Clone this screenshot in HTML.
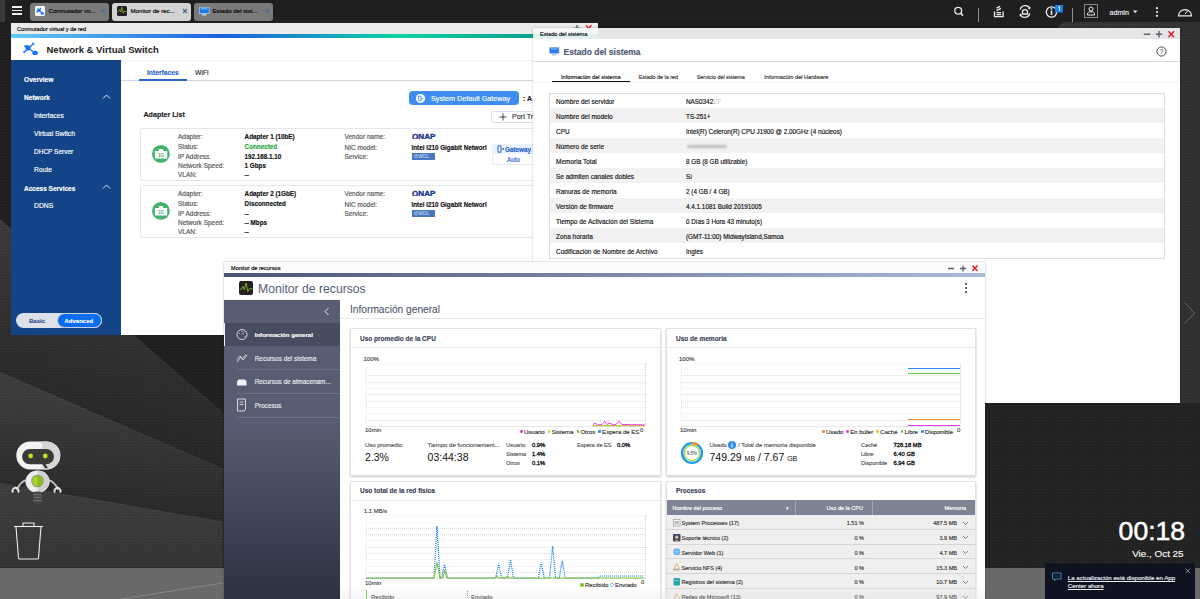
<!DOCTYPE html>
<html><head><meta charset="utf-8">
<style>
*{margin:0;padding:0;box-sizing:border-box}
html,body{width:1200px;height:599px;overflow:hidden;background:#262626;font-family:"Liberation Sans",sans-serif;color:#222}
.abs{position:absolute}
.t{position:absolute;white-space:nowrap;line-height:1;-webkit-text-stroke:0.15px currentColor}
svg{display:block}
</style></head><body>
<svg class="abs" style="left:0;top:0" width="1200" height="599">
  <defs>
   <pattern id="tex" width="3" height="3" patternUnits="userSpaceOnUse"><rect x="0" y="0" width="1.5" height="1.5" fill="rgba(255,255,255,0.035)"/></pattern>
   <linearGradient id="gAB" gradientUnits="userSpaceOnUse" x1="40" y1="250" x2="0" y2="420"><stop offset="0" stop-color="#363636"/><stop offset="1" stop-color="#242424"/></linearGradient>
   <linearGradient id="gBC" gradientUnits="userSpaceOnUse" x1="60" y1="400" x2="50" y2="500"><stop offset="0" stop-color="#3a3a3a"/><stop offset="1" stop-color="#282828"/></linearGradient>
   <linearGradient id="gC" gradientUnits="userSpaceOnUse" x1="0" y1="500" x2="0" y2="567"><stop offset="0" stop-color="#3b3b3b"/><stop offset="1" stop-color="#333"/></linearGradient>
  </defs>
  <rect x="0" y="0" width="1200" height="599" fill="#272727"/>
  <polygon points="0,22 1200,22 1200,403 223,413 0,219.5" fill="#1e1e1e"/>
  <polygon points="1063,22 1200,22 1200,28 1057,28" fill="#333"/><rect x="1180" y="22" width="20" height="390" fill="#2e2e2e"/>
  <polygon points="0,219.5 223,413 223,469 0,372.3" fill="url(#gAB)"/>
  <polygon points="0,372.3 223,469 223,522 0,483.3" fill="url(#gBC)"/>
  <polygon points="0,483.3 223,522 223,567 0,567" fill="url(#gC)"/>
  <g stroke="rgba(255,255,255,0.09)" stroke-width="0.7"><line x1="0" y1="219.5" x2="223" y2="413"/><line x1="0" y1="372.3" x2="223" y2="469"/><line x1="0" y1="483.3" x2="223" y2="522"/></g>
  <rect x="985" y="403" width="215" height="165" fill="#212121"/>
  <rect x="0" y="568" width="1200" height="31" fill="#676767"/>
  <line x1="120" y1="599" x2="223" y2="583" stroke="#8a8a8a" stroke-width="0.8"/>
  <rect x="0" y="22" width="1200" height="577" fill="url(#tex)"/>
</svg>
<div class="abs" style="left:0px;top:0px;width:1200px;height:22px;background:#1f1f1f"></div>
<div class="abs" style="left:0px;top:0px;width:5px;height:22px;background:#3a3a3a"></div>
<div class="abs" style="left:12px;top:6px;width:10px;height:1.5px;background:#f0f0f0"></div>
<div class="abs" style="left:12px;top:9.6px;width:10px;height:1.5px;background:#f0f0f0"></div>
<div class="abs" style="left:12px;top:13.2px;width:10px;height:1.5px;background:#f0f0f0"></div>
<div class="abs" style="left:30px;top:2.5px;width:79px;height:18px;background:#7a7a7a;border-radius:3px"></div>
<div class="t" style="left:48.5px;top:8.22px;font-size:6.15px;color:#000;font-weight:400;">Conmutador vir...</div>
<svg class="abs" style="left:99.5px;top:7.8px" width="6" height="6"><path d="M1 1l4 4M5 1l-4 4" stroke="#4a6d99" stroke-width="1.3"/></svg>
<div class="abs" style="left:112px;top:2.5px;width:79px;height:18px;background:#d3d3d3;border-radius:3px"></div>
<div class="t" style="left:130.5px;top:8.22px;font-size:6.15px;color:#000;font-weight:400;">Monitor de rec...</div>
<svg class="abs" style="left:181.5px;top:7.8px" width="6" height="6"><path d="M1 1l4 4M5 1l-4 4" stroke="#4a6d99" stroke-width="1.3"/></svg>
<div class="abs" style="left:194px;top:2.5px;width:79px;height:18px;background:#7a7a7a;border-radius:3px"></div>
<div class="t" style="left:212.5px;top:8.22px;font-size:6.15px;color:#000;font-weight:400;">Estado del sist...</div>
<svg class="abs" style="left:263.5px;top:7.8px" width="6" height="6"><path d="M1 1l4 4M5 1l-4 4" stroke="#4a6d99" stroke-width="1.3"/></svg>
<svg class="abs" style="left:35px;top:6px" width="10" height="10"><rect width="10" height="10" rx="1.5" fill="#f5f8fc"/>
<g stroke="#1e78f0" stroke-width="1.1"><line x1="1.5" y1="6.5" x2="6" y2="2"/><line x1="2.5" y1="2.5" x2="7" y2="7"/></g><circle cx="4" cy="4.3" r="1.6" fill="#1e78f0"/><ellipse cx="7.4" cy="7.5" rx="1.6" ry="1.2" fill="#1e78f0"/></svg>
<svg class="abs" style="left:117px;top:6px" width="10" height="10"><rect width="10" height="10" rx="1.5" fill="#231f20"/>
<path d="M0.3 6l1.2-0.5l1.2-2l1 2.5l1.3-4.8l1.2 6l1-1.8h2.5" stroke="#7dba2a" stroke-width="0.8" fill="none"/></svg>
<svg class="abs" style="left:199px;top:7px" width="11" height="10"><rect x="0" y="0" width="10.5" height="7" fill="#bcd0e0"/><rect x="0.7" y="0.6" width="9.1" height="5.6" fill="#1f7ae8"/><rect x="2" y="1.3" width="6.5" height="1" fill="#8cc0f4"/><rect x="3" y="7" width="4.5" height="1.6" fill="#b8c4cc"/></svg>
<svg class="abs" style="left:940px;top:0" width="260" height="22">
 <g fill="none" stroke="#ececec" stroke-width="1.3">
  <circle cx="18.2" cy="10.8" r="3.4"/><line x1="20.6" y1="13.2" x2="23" y2="15.6" stroke-width="1.6"/>
  <path d="M54.5 11.5v5.2h8.6v-5.2"/><path d="M56.5 14.6h4.6M56.5 12.6h4.6"/><path d="M56.5 10.6l4.4-2.2M56.5 8.2l3.6-1.8"/>
  <path d="M80.2 9.5a5.3 5.3 0 0 1 9.8-1"/><path d="M89.8 13.5a5.3 5.3 0 0 1 -9.8 1"/>
  <path d="M82.5 14v-2.2a2.5 2.2 0 0 1 5 0v2.2z"/>
  <circle cx="111.5" cy="12" r="5.2"/>
  <rect x="144.5" y="4.5" width="13" height="13" stroke="#8a8a8a" stroke-width="1"/>
  <path d="M147.5 15v-1.2c0-1.2 1.2-2 3.5-2s3.5 .8 3.5 2v1.2z" stroke-width="1"/><circle cx="151" cy="9" r="2" stroke-width="1"/>
  <path d="M238.5 15.8a6.5 6.2 0 1 1 13 0z" stroke-width="1.2"/><path d="M245 14l3-3.5" stroke-width="1"/>
 </g>
 <rect x="110.7" y="10.5" width="1.6" height="4.5" fill="#ececec"/><rect x="110.7" y="8.2" width="1.6" height="1.4" fill="#ececec"/>
 <path d="M90.8 7.2l-1.2 2.2l-1.8-1.4z M79.2 15.8l1.2-2.2l1.8 1.4z" fill="#ececec"/>
 <line x1="38.5" y1="8" x2="38.5" y2="22" stroke="#8a8fa8" stroke-width="1"/>
 <line x1="132.5" y1="8" x2="132.5" y2="22" stroke="#8a8fa8" stroke-width="1"/>
 <rect x="115" y="5" width="8" height="7.5" fill="#1e7ef0"/>
 <path d="M118.3 7.2l1.2-0.8v4.5" stroke="#fff" stroke-width="0.9" fill="none"/>
 <path d="M193 10.5h4.5l-2.25 2.8z" fill="#eee"/>
 <circle cx="217" cy="8.2" r="1.1" fill="#eee"/><circle cx="217" cy="12" r="1.1" fill="#eee"/><circle cx="217" cy="15.8" r="1.1" fill="#eee"/>
</svg>
<div class="t" style="left:1109.5px;top:9.85px;font-size:7.1px;color:#eee;font-weight:400;">admin</div>
<div class="abs" style="left:11px;top:23px;width:587px;height:312px;overflow:hidden;background:#fff">
<div class="abs" style="left:0px;top:0px;width:587px;height:11px;background:#ebebeb"></div>
<div class="t" style="left:6px;top:4.1px;font-size:5.6px;color:#000;font-weight:400;">Conmutador virtual y de red</div>
<div class="abs" style="left:0px;top:11px;width:587px;height:4px;background:linear-gradient(to right,#62cbf2 0%,#1f5fe0 36%,#0dd3a5 66%,#0b8585 100%)"></div>
<svg class="abs" style="left:549px;top:1.3px" width="36" height="9"><g stroke="#5a6070" stroke-width="1.4"><path d="M17 1.1v6.4M13.8 4.3h6.4"/></g><path d="M26 1.3l5.5 6M31.5 1.3l-5.5 6" stroke="#e8141c" stroke-width="1.3"/></svg>
<svg class="abs" style="left:9px;top:17px" width="20" height="17"><g stroke="#1577f2" stroke-width="1.2" fill="none"><line x1="4.2" y1="12.2" x2="13.3" y2="3.7"/><line x1="5.7" y1="6.3" x2="15" y2="12.9"/></g><circle cx="8.1" cy="7.9" r="2.6" fill="#1577f2"/><circle cx="5.7" cy="6.3" r="1.3" fill="#1577f2"/><circle cx="13.3" cy="3.7" r="1.1" fill="#1577f2"/><circle cx="4.2" cy="12.2" r="1" fill="#1577f2"/><ellipse cx="15.1" cy="12.9" rx="2.8" ry="2.2" fill="#1577f2"/></svg>
<div class="t" style="left:35.5px;top:22.35px;font-size:9.5px;color:#222;font-weight:700;-webkit-text-stroke:0;">Network &amp; Virtual Switch</div>
<div class="abs" style="left:110px;top:37px;width:477px;height:1px;background:#eef0f3"></div>
<div class="abs" style="left:0px;top:37px;width:110px;height:275px;background:#134487"></div>
<div class="t" style="left:13px;top:53.6px;font-size:6.6px;color:#fff;font-weight:700;">Overview</div>
<div class="t" style="left:13px;top:72.1px;font-size:6.6px;color:#fff;font-weight:700;">Network</div>
<div class="t" style="left:23px;top:90.1px;font-size:6.8px;color:#fff;font-weight:400;">Interfaces</div>
<div class="t" style="left:23px;top:107.9px;font-size:6.8px;color:#fff;font-weight:400;">Virtual Switch</div>
<div class="t" style="left:23px;top:126.25px;font-size:6.5px;color:#fff;font-weight:400;">DHCP Server</div>
<div class="t" style="left:23px;top:144.1px;font-size:6.8px;color:#fff;font-weight:400;">Route</div>
<div class="t" style="left:13px;top:162.65px;font-size:6.5px;color:#fff;font-weight:700;">Access Services</div>
<div class="t" style="left:23px;top:180.1px;font-size:6.8px;color:#fff;font-weight:400;">DDNS</div>
<svg class="abs" style="left:91px;top:70.5px" width="9" height="6"><path d="M1 4.5l3.5-3.5l3.5 3.5" stroke="#dfe6f0" stroke-width="1" fill="none"/></svg>
<svg class="abs" style="left:91px;top:161px" width="9" height="6"><path d="M1 4.5l3.5-3.5l3.5 3.5" stroke="#dfe6f0" stroke-width="1" fill="none"/></svg>
<div class="abs" style="left:5px;top:289.5px;width:86px;height:15.5px;background:#dde2ea;border-radius:8px"></div>
<div class="abs" style="left:45.5px;top:289.5px;width:45.5px;height:15.5px;background:#0a6cf0;border-radius:8px;border:1px solid #c8d2e0"></div>
<div class="t" style="left:18px;top:295.2px;font-size:6px;color:#1f4a88;font-weight:700;">Basic</div>
<div class="t" style="left:53.5px;top:295.2px;font-size:6px;color:#fff;font-weight:700;">Advanced</div>
<div class="t" style="left:136px;top:47.05px;font-size:6.7px;color:#2a66cc;font-weight:700;">Interfaces</div>
<div class="t" style="left:184px;top:47.0px;font-size:6.8px;color:#333;font-weight:400;">WiFi</div>
<div class="abs" style="left:110px;top:57px;width:477px;height:1px;background:#d4d8de"></div>
<div class="abs" style="left:128px;top:56px;width:48px;height:1.8px;background:#2a66cc"></div>
<div class="t" style="left:132.5px;top:89.35px;font-size:7.1px;color:#222;font-weight:700;">Adapter List</div>
<div class="abs" style="left:397.6px;top:68.4px;width:110px;height:13.3px;background:#3d8ef0;border-radius:4px"></div>
<svg class="abs" style="left:404px;top:69.5px" width="11" height="11"><circle cx="5.5" cy="5.5" r="4.6" fill="#fff"/><path d="M3.6 3.2h2.4v4.6h-2.4z" fill="none" stroke="#3d8ef0" stroke-width="0.9"/><path d="M6.3 5.5h1.8" stroke="#3d8ef0" stroke-width="0.9"/></svg>
<div class="t" style="left:420px;top:71.9px;font-size:7.2px;color:#fff;font-weight:400;">System Default Gateway</div>
<div class="t" style="left:512px;top:72.4px;font-size:7px;color:#222;font-weight:700;">: A</div>
<div class="abs" style="left:480px;top:87.6px;width:60px;height:12px;background:#fff;border:1px solid #dde1e6;border-radius:3px"></div>
<svg class="abs" style="left:487.5px;top:89.5px" width="8" height="8"><path d="M4 0.5v7M0.5 4h7" stroke="#333" stroke-width="0.9"/></svg>
<div class="t" style="left:501px;top:90.0px;font-size:7px;color:#333;font-weight:400;">Port Tr</div>
<div class="abs" style="left:128.6px;top:104.7px;width:460px;height:53px;background:#fff;border:1px solid #e3e7ed;border-radius:2px"></div>
<svg class="abs" style="left:141.2px;top:122.1px" width="18" height="18"><circle cx="8.9" cy="8.9" r="8.9" fill="#45b36e"/><path d="M2.8 6.1h4v-2.1h4.2v2.1h4.2v7.5h-12.2z" fill="#fff"/><text x="9" y="11.6" font-size="4.6" fill="#45b36e" text-anchor="middle" font-family="Liberation Sans" font-weight="700">1G</text></svg>
<div class="t" style="left:167px;top:111.35px;font-size:6.5px;color:#555;font-weight:400;">Adapter:</div>
<div class="t" style="left:233.6px;top:111.45px;font-size:6.3px;color:#111;font-weight:700;">Adapter 1 (10bE)</div>
<div class="t" style="left:167px;top:121.35px;font-size:6.5px;color:#555;font-weight:400;">Status:</div>
<div class="t" style="left:233.6px;top:121.45px;font-size:6.3px;color:#1ca83a;font-weight:700;">Connected</div>
<div class="t" style="left:167px;top:130.55px;font-size:6.5px;color:#555;font-weight:400;">IP Address:</div>
<div class="t" style="left:233.6px;top:130.65px;font-size:6.3px;color:#111;font-weight:700;">192.168.1.10</div>
<div class="t" style="left:167px;top:139.55px;font-size:6.5px;color:#555;font-weight:400;">Network Speed:</div>
<div class="t" style="left:233.6px;top:139.65px;font-size:6.3px;color:#111;font-weight:700;">1 Gbps</div>
<div class="t" style="left:167px;top:148.55px;font-size:6.5px;color:#555;font-weight:400;">VLAN:</div>
<div class="t" style="left:233.6px;top:148.65px;font-size:6.3px;color:#111;font-weight:700;">--</div>
<div class="t" style="left:333.5px;top:111.35px;font-size:6.5px;color:#555;font-weight:400;">Vendor name:</div>
<div class="t" style="left:333.5px;top:121.85px;font-size:6.5px;color:#555;font-weight:400;">NIC model:</div>
<div class="t" style="left:333.5px;top:131.05px;font-size:6.5px;color:#555;font-weight:400;">Service:</div>
<svg class="abs" style="left:400.5px;top:110.3px" width="26" height="6"><text x="0" y="5.6" font-size="7.2" font-weight="700" fill="#1c3a8c" font-family="Liberation Sans" textLength="23.5" lengthAdjust="spacingAndGlyphs" stroke="#1c3a8c" stroke-width="0.35">QNAP</text><circle cx="4.2" cy="4.8" r="0.6" fill="#e0202a"/></svg>
<div class="t" style="left:400.5px;top:121.95px;font-size:6.3px;color:#111;font-weight:700;">Intel I210 Gigabit Networl</div>
<div class="abs" style="left:400.5px;top:130.2px;width:23.5px;height:6.5px;background:#4a78c0"></div>
<svg class="abs" style="left:402.5px;top:131.3px" width="5" height="5"><circle cx="2.2" cy="2.4" r="1.6" fill="none" stroke="#dde6f4" stroke-width="0.6"/><path d="M2.2 0.3v2" stroke="#dde6f4" stroke-width="0.6"/></svg>
<div class="t" style="left:407.5px;top:132.2px;font-size:4.6px;color:#dde6f4;font-weight:400;-webkit-text-stroke:0">WOL</div>
<div class="abs" style="left:128.6px;top:161.7px;width:460px;height:53px;background:#fff;border:1px solid #e3e7ed;border-radius:2px"></div>
<svg class="abs" style="left:141.2px;top:179.1px" width="18" height="18"><circle cx="8.9" cy="8.9" r="8.9" fill="#45b36e"/><path d="M2.8 6.1h4v-2.1h4.2v2.1h4.2v7.5h-12.2z" fill="#fff"/><text x="9" y="11.6" font-size="4.6" fill="#45b36e" text-anchor="middle" font-family="Liberation Sans" font-weight="700">1G</text></svg>
<div class="t" style="left:167px;top:168.35px;font-size:6.5px;color:#555;font-weight:400;">Adapter:</div>
<div class="t" style="left:233.6px;top:168.45px;font-size:6.3px;color:#111;font-weight:700;">Adapter 2 (1GbE)</div>
<div class="t" style="left:167px;top:178.35px;font-size:6.5px;color:#555;font-weight:400;">Status:</div>
<div class="t" style="left:233.6px;top:178.45px;font-size:6.3px;color:#111;font-weight:700;">Disconnected</div>
<div class="t" style="left:167px;top:187.55px;font-size:6.5px;color:#555;font-weight:400;">IP Address:</div>
<div class="t" style="left:233.6px;top:187.65px;font-size:6.3px;color:#111;font-weight:700;">--</div>
<div class="t" style="left:167px;top:196.55px;font-size:6.5px;color:#555;font-weight:400;">Network Speed:</div>
<div class="t" style="left:233.6px;top:196.65px;font-size:6.3px;color:#111;font-weight:700;">-- Mbps</div>
<div class="t" style="left:167px;top:205.55px;font-size:6.5px;color:#555;font-weight:400;">VLAN:</div>
<div class="t" style="left:233.6px;top:205.65px;font-size:6.3px;color:#111;font-weight:700;">--</div>
<div class="t" style="left:333.5px;top:168.35px;font-size:6.5px;color:#555;font-weight:400;">Vendor name:</div>
<div class="t" style="left:333.5px;top:178.85px;font-size:6.5px;color:#555;font-weight:400;">NIC model:</div>
<div class="t" style="left:333.5px;top:188.05px;font-size:6.5px;color:#555;font-weight:400;">Service:</div>
<svg class="abs" style="left:400.5px;top:167.3px" width="26" height="6"><text x="0" y="5.6" font-size="7.2" font-weight="700" fill="#1c3a8c" font-family="Liberation Sans" textLength="23.5" lengthAdjust="spacingAndGlyphs" stroke="#1c3a8c" stroke-width="0.35">QNAP</text><circle cx="4.2" cy="4.8" r="0.6" fill="#e0202a"/></svg>
<div class="t" style="left:400.5px;top:178.95px;font-size:6.3px;color:#111;font-weight:700;">Intel I210 Gigabit Networl</div>
<div class="abs" style="left:400.5px;top:187.2px;width:23.5px;height:6.5px;background:#4a78c0"></div>
<svg class="abs" style="left:402.5px;top:188.3px" width="5" height="5"><circle cx="2.2" cy="2.4" r="1.6" fill="none" stroke="#dde6f4" stroke-width="0.6"/><path d="M2.2 0.3v2" stroke="#dde6f4" stroke-width="0.6"/></svg>
<div class="t" style="left:407.5px;top:189.2px;font-size:4.6px;color:#dde6f4;font-weight:400;-webkit-text-stroke:0">WOL</div>
<div class="abs" style="left:481px;top:120.5px;width:50px;height:21px;background:#fff;border:1px solid #e6ecf4"></div>
<div class="abs" style="left:481px;top:120.5px;width:50px;height:10px;background:#eaf2fd"></div>
<svg class="abs" style="left:485.5px;top:122.3px" width="8" height="8"><path d="M1 0.8h3v6.4h-3z" fill="none" stroke="#1f5fc8" stroke-width="0.9"/><path d="M4.5 4h2.5M6 3v2" stroke="#1f5fc8" stroke-width="0.8"/></svg>
<div class="t" style="left:494px;top:123.95px;font-size:6.3px;color:#1f5fc8;font-weight:700;">Gateway</div>
<div class="t" style="left:496px;top:134.25px;font-size:6.3px;color:#1f5fc8;font-weight:400;">Auto</div>
</div>
<div class="abs" style="left:533px;top:28px;width:647px;height:375px;overflow:hidden;background:#fff;box-shadow:0 0 2px rgba(0,0,0,.25)">
<div class="abs" style="left:0px;top:0px;width:647px;height:10.5px;background:#e6e6e6"></div>
<div class="abs" style="left:0px;top:0px;width:65px;height:10.5px;background:#f6f8f8"></div>
<div class="t" style="left:7px;top:3.6px;font-size:5.6px;color:#000;font-weight:400;">Estado del sistema</div>
<svg class="abs" style="left:609px;top:1.5px" width="36" height="9"><g stroke="#5a6070" stroke-width="1.4"><path d="M1.8 4.3h6.4M13.8 4.3h6.4M17 1.1v6.4"/></g><path d="M26.5 1.3l5.5 6M32 1.3l-5.5 6" stroke="#e8141c" stroke-width="1.3"/></svg>
<div class="abs" style="left:0px;top:6px;width:65px;height:4.5px;background:rgba(13,170,160,0.09)"></div>
<svg class="abs" style="left:15.5px;top:19px" width="11" height="10"><rect x="0" y="0" width="10.5" height="7" fill="#c4d4e2"/><rect x="0.7" y="0.6" width="9.1" height="5.6" fill="#2a7de6"/><rect x="2" y="1.4" width="6.5" height="1" fill="#8cc0f4"/><rect x="3" y="7" width="4.5" height="1.4" fill="#b8c4cc"/></svg>
<div class="t" style="left:30.5px;top:19.65px;font-size:8.5px;color:#4f5874;font-weight:700;">Estado del sistema</div>
<svg class="abs" style="left:623px;top:17.5px" width="11" height="11"><circle cx="5.5" cy="5.5" r="4.6" fill="none" stroke="#333" stroke-width="0.9"/><text x="5.5" y="8" font-size="7" fill="#333" text-anchor="middle" font-family="Liberation Sans">?</text></svg>
<div class="abs" style="left:0px;top:33.3px;width:647px;height:1px;background:#d8d8d8"></div>
<div class="t" style="left:28px;top:47.08px;font-size:5.65px;color:#111;font-weight:400;">Información del sistema</div>
<div class="t" style="left:105.75px;top:47.2px;font-size:5.4px;color:#333;font-weight:400;">Estado de la red</div>
<div class="t" style="left:163.75px;top:47.2px;font-size:5.4px;color:#333;font-weight:400;">Servicio del sistema</div>
<div class="t" style="left:231.25px;top:47.1px;font-size:5.6px;color:#333;font-weight:400;">Información del Hardware</div>
<div class="abs" style="left:18.5px;top:52.8px;width:78.5px;height:1.3px;background:#111"></div>
<div class="abs" style="left:0px;top:54.3px;width:647px;height:1px;background:#f0f0f0"></div>
<div class="abs" style="left:16px;top:65px;width:616px;height:166px;background:#fff;border:1px solid #dedede"></div>
<div class="t" style="left:23px;top:70.65px;font-size:6.5px;color:#111;font-weight:400;">Nombre del servidor</div>
<div class="t" style="left:153px;top:70.73px;font-size:6.35px;color:#111;font-weight:400;">NAS0342<span style="color:#c8c8c8;-webkit-text-stroke:0">EF</span></div>
<div class="abs" style="left:17px;top:80px;width:614px;height:15px;background:#f2f2f2"></div>
<div class="t" style="left:23px;top:85.65px;font-size:6.5px;color:#111;font-weight:400;">Nombre del modelo</div>
<div class="t" style="left:153px;top:85.73px;font-size:6.35px;color:#111;font-weight:400;">TS-251+</div>
<div class="t" style="left:23px;top:100.65px;font-size:6.5px;color:#111;font-weight:400;">CPU</div>
<div class="t" style="left:153px;top:100.72px;font-size:6.35px;color:#111;font-weight:400;">Intel(R) Celeron(R) CPU J1900 @ 2.00GHz (4 núcleos)</div>
<div class="abs" style="left:17px;top:110px;width:614px;height:15px;background:#f2f2f2"></div>
<div class="t" style="left:23px;top:115.65px;font-size:6.5px;color:#111;font-weight:400;">Número de serie</div>
<div class="t" style="left:23px;top:130.65px;font-size:6.5px;color:#111;font-weight:400;">Memoria Total</div>
<div class="t" style="left:153px;top:130.72px;font-size:6.35px;color:#111;font-weight:400;">8 GB (8 GB utilizable)</div>
<div class="abs" style="left:17px;top:140px;width:614px;height:15px;background:#f2f2f2"></div>
<div class="t" style="left:23px;top:145.65px;font-size:6.5px;color:#111;font-weight:400;">Se admiten canales dobles</div>
<div class="t" style="left:153px;top:145.72px;font-size:6.35px;color:#111;font-weight:400;">Sí</div>
<div class="t" style="left:23px;top:160.65px;font-size:6.5px;color:#111;font-weight:400;">Ranuras de memoria</div>
<div class="t" style="left:153px;top:160.72px;font-size:6.35px;color:#111;font-weight:400;">2 (4 GB / 4 GB)</div>
<div class="abs" style="left:17px;top:170px;width:614px;height:15px;background:#f2f2f2"></div>
<div class="t" style="left:23px;top:175.65px;font-size:6.5px;color:#111;font-weight:400;">Versión de firmware</div>
<div class="t" style="left:153px;top:175.72px;font-size:6.35px;color:#111;font-weight:400;">4.4.1.1081 Build 20191005</div>
<div class="t" style="left:23px;top:190.65px;font-size:6.5px;color:#111;font-weight:400;">Tiempo de Activación del Sistema</div>
<div class="t" style="left:153px;top:190.72px;font-size:6.35px;color:#111;font-weight:400;">0 Días 3 Hora 43 minuto(s)</div>
<div class="abs" style="left:17px;top:200px;width:614px;height:15px;background:#f2f2f2"></div>
<div class="t" style="left:23px;top:205.65px;font-size:6.5px;color:#111;font-weight:400;">Zona horaria</div>
<div class="t" style="left:153px;top:205.72px;font-size:6.35px;color:#111;font-weight:400;">(GMT-11:00) MidwayIsland,Samoa</div>
<div class="t" style="left:23px;top:220.65px;font-size:6.5px;color:#111;font-weight:400;">Codificación de Nombre de Archivo</div>
<div class="t" style="left:153px;top:220.72px;font-size:6.35px;color:#111;font-weight:400;">Inglés</div>
<div class="abs" style="left:154px;top:116.5px;width:40px;height:3.5px;background:#bdbdbd;border-radius:3px;filter:blur(1px)"></div>
</div>
<div class="abs" style="left:224px;top:262px;width:761px;height:337px;overflow:hidden;background:#fff;box-shadow:0 0 2px rgba(0,0,0,.3)">
<div class="abs" style="left:-1px;top:0px;width:763px;height:11px;background:#fbfbfb"></div>
<div class="t" style="left:7px;top:4.1px;font-size:5.6px;color:#000;font-weight:400;">Monitor de recursos</div>
<svg class="abs" style="left:722px;top:2px" width="36" height="9"><g stroke="#5a6070" stroke-width="1.3"><path d="M2 4.5h6M14 4.5h6M17 1.5v6"/></g><path d="M26.5 1.5l5 5.5M31.5 1.5l-5 5.5" stroke="#e8141c" stroke-width="1.3"/></svg>
<div class="abs" style="left:-1px;top:11px;width:763px;height:4px;background:linear-gradient(to right,#4b5670,#a8bcd6)"></div>
<svg class="abs" style="left:15px;top:19px" width="14" height="14"><rect width="14" height="14" rx="2.2" fill="#231f20"/><path d="M0.5 9l1.8-0.8l1.6-3l1.4 3.5l1.8-6.7l1.7 8.5l1.4-2.7h3.3" stroke="#7dba2a" stroke-width="0.9" fill="none"/></svg>
<div class="t" style="left:34px;top:21.0px;font-size:12.2px;color:#555e78;font-weight:400;-webkit-text-stroke:0;">Monitor de recursos</div>
<svg class="abs" style="left:740px;top:20px" width="4" height="12"><circle cx="2" cy="2" r="1" fill="#333"/><circle cx="2" cy="6" r="1" fill="#333"/><circle cx="2" cy="10" r="1" fill="#333"/></svg>
<div class="abs" style="left:0px;top:37.5px;width:116px;height:300px;background:linear-gradient(to bottom,#585f74 0px,#565d72 120px,#2d3242 300px)"></div>
<div class="abs" style="left:0px;top:60.8px;width:116px;height:22.8px;background:#474d60;border-left:1px solid #f4f4f4"></div>
<svg class="abs" style="left:99px;top:45px" width="7" height="9"><path d="M5.5 1l-3.5 3.5l3.5 3.5" stroke="#e8ebf0" stroke-width="1" fill="none"/></svg>
<div class="t" style="left:30.7px;top:70.35px;font-size:6.1px;color:#fff;font-weight:700;">Información general</div>
<div class="t" style="left:30.7px;top:93.67px;font-size:6.45px;color:#e8eaf0;font-weight:400;">Recursos del sistema</div>
<div class="t" style="left:30.7px;top:117.3px;font-size:6.4px;color:#e8eaf0;font-weight:400;">Recursos de almacenam...</div>
<div class="t" style="left:30.7px;top:140.67px;font-size:6.45px;color:#e8eaf0;font-weight:400;">Procesos</div>
<div class="abs" style="left:13px;top:107.2px;width:103px;height:1px;background:#6a7083"></div>
<div class="abs" style="left:13px;top:131px;width:103px;height:1px;background:#6a7083"></div>
<div class="abs" style="left:13px;top:154.5px;width:103px;height:1px;background:#6a7083"></div>
<svg class="abs" style="left:12px;top:66px" width="14" height="14"><circle cx="6" cy="6.5" r="5" stroke="#e6e8ee" stroke-width="0.9" fill="none"/><path d="M6 6.5l2.2-2.3M3 5.5h1M6 3v1M8.5 8.5h1" stroke="#e6e8ee" stroke-width="0.8"/></svg>
<svg class="abs" style="left:12px;top:90px" width="14" height="12"><path d="M1 10l3.5-4.5l2.5 2.5l4-5M1 7.5l3-3.5l2.5 2.5l3.5-4" stroke="#e6e8ee" stroke-width="0.8" fill="none"/></svg>
<svg class="abs" style="left:12px;top:114px" width="14" height="12"><path d="M2.5 3.5h6.5l1.5 2v4h-9.5v-4z" fill="#f0f2f6"/></svg>
<svg class="abs" style="left:12px;top:136px" width="14" height="14"><path d="M1.5 1h8v10.5l-1.5 1.5h-6.5z" stroke="#e6e8ee" stroke-width="0.9" fill="none"/><path d="M3.5 4h4M3.5 6.5h4" stroke="#e6e8ee" stroke-width="0.8"/></svg>
<div class="t" style="left:126px;top:42.5px;font-size:10.2px;color:#434a62;font-weight:400;-webkit-text-stroke:0;">Información general</div>
<div class="abs" style="left:116px;top:56px;width:646px;height:1px;background:#e6e6e6"></div>
<div class="abs" style="left:125.5px;top:66px;width:311.0px;height:147.5px;background:#fff;border:1px solid #e2e2e2;box-shadow:0 1px 2px rgba(0,0,0,.22)"></div>
<div class="t" style="left:136.0px;top:73.65px;font-size:6.5px;color:#3b4258;font-weight:700;">Uso promedio de la CPU</div>
<div class="abs" style="left:126.5px;top:85px;width:309.0px;height:1px;background:#e6e6e6"></div>
<div class="abs" style="left:441.5px;top:66px;width:310.0px;height:147.5px;background:#fff;border:1px solid #e2e2e2;box-shadow:0 1px 2px rgba(0,0,0,.22)"></div>
<div class="t" style="left:452.0px;top:73.65px;font-size:6.5px;color:#3b4258;font-weight:700;">Uso de memoria</div>
<div class="abs" style="left:442.5px;top:85px;width:308.0px;height:1px;background:#e6e6e6"></div>
<div class="abs" style="left:125.5px;top:218.8px;width:311.0px;height:139.2px;background:#fff;border:1px solid #e2e2e2;box-shadow:0 1px 2px rgba(0,0,0,.22)"></div>
<div class="t" style="left:136.0px;top:226.45px;font-size:6.5px;color:#3b4258;font-weight:700;">Uso total de la red física</div>
<div class="abs" style="left:126.5px;top:237.8px;width:309.0px;height:1px;background:#e6e6e6"></div>
<div class="abs" style="left:441.5px;top:218.5px;width:310.0px;height:139.5px;background:#fff;border:1px solid #e2e2e2;box-shadow:0 1px 2px rgba(0,0,0,.22)"></div>
<div class="t" style="left:452.0px;top:226.15px;font-size:6.5px;color:#3b4258;font-weight:700;">Procesos</div>
<div class="abs" style="left:442.5px;top:237.5px;width:308.0px;height:1px;background:#e6e6e6"></div>
<div class="abs" style="left:141.5px;top:100.6px;width:1px;height:63.39999999999998px;background:#f3f3f3"></div>
<div class="abs" style="left:141.5px;top:100.6px;width:279.20000000000005px;height:1px;background:repeating-linear-gradient(to right,#dcdcdc 0 1px,transparent 1px 2px);opacity:0.35"></div>
<div class="abs" style="left:141.5px;top:106.94px;width:279.20000000000005px;height:1px;background:repeating-linear-gradient(to right,#dcdcdc 0 1px,transparent 1px 2px);opacity:0.35"></div>
<div class="abs" style="left:141.5px;top:113.28px;width:279.20000000000005px;height:1px;background:repeating-linear-gradient(to right,#dcdcdc 0 1px,transparent 1px 2px);opacity:1"></div>
<div class="abs" style="left:141.5px;top:119.62px;width:279.20000000000005px;height:1px;background:repeating-linear-gradient(to right,#dcdcdc 0 1px,transparent 1px 2px);opacity:1"></div>
<div class="abs" style="left:141.5px;top:125.96px;width:279.20000000000005px;height:1px;background:repeating-linear-gradient(to right,#dcdcdc 0 1px,transparent 1px 2px);opacity:0.55"></div>
<div class="abs" style="left:141.5px;top:132.3px;width:279.20000000000005px;height:1px;background:repeating-linear-gradient(to right,#dcdcdc 0 1px,transparent 1px 2px);opacity:1"></div>
<div class="abs" style="left:141.5px;top:138.64px;width:279.20000000000005px;height:1px;background:repeating-linear-gradient(to right,#dcdcdc 0 1px,transparent 1px 2px);opacity:1"></div>
<div class="abs" style="left:141.5px;top:144.98px;width:279.20000000000005px;height:1px;background:repeating-linear-gradient(to right,#dcdcdc 0 1px,transparent 1px 2px);opacity:0.55"></div>
<div class="abs" style="left:141.5px;top:151.32px;width:279.20000000000005px;height:1px;background:repeating-linear-gradient(to right,#dcdcdc 0 1px,transparent 1px 2px);opacity:0.55"></div>
<div class="abs" style="left:141.5px;top:157.66px;width:279.20000000000005px;height:1px;background:repeating-linear-gradient(to right,#dcdcdc 0 1px,transparent 1px 2px);opacity:1"></div>
<div class="abs" style="left:420.7px;top:100.6px;width:1px;height:63.39999999999998px;background:repeating-linear-gradient(to bottom,#d0d0d0 0 1px,transparent 1px 2px)"></div>
<div class="abs" style="left:141.5px;top:164px;width:279.20000000000005px;height:1px;background:#e8e8e8"></div>
<div class="t" style="left:139.5px;top:94.4px;font-size:6px;color:#444;font-weight:400;">100%</div>
<div class="t" style="left:141px;top:165.4px;font-size:6px;color:#444;font-weight:400;">10min</div>
<div class="t" style="left:416px;top:164.9px;font-size:6px;color:#444;font-weight:400;">0</div>
<div class="t" style="left:296px;top:166.68px;font-size:6.05px;color:#333;font-weight:400;"><span style="display:inline-block;width:2.6px;height:2.6px;border-radius:50%;background:#e83ce8;margin:0 1.3px 1.2px 0;vertical-align:middle"></span><span style="margin-right:3.025px">Usuario</span><span style="display:inline-block;width:2.6px;height:2.6px;border-radius:50%;background:#f0c020;margin:0 1.3px 1.2px 0;vertical-align:middle"></span><span style="margin-right:3.025px">Sistema</span><span style="display:inline-block;width:2.6px;height:2.6px;border-radius:50%;background:#66c030;margin:0 1.3px 1.2px 0;vertical-align:middle"></span><span style="margin-right:3.025px">Otros</span><span style="display:inline-block;width:2.6px;height:2.6px;border-radius:50%;background:#2a8cf0;margin:0 1.3px 1.2px 0;vertical-align:middle"></span><span style="margin-right:3.025px">Espera de ES</span></div>
<div class="t" style="left:141px;top:179.9px;font-size:6px;color:#555;font-weight:400;">Uso promedio</div>
<div class="t" style="left:141px;top:189.85px;font-size:10.5px;color:#111;font-weight:400;-webkit-text-stroke:0;">2.3%</div>
<div class="t" style="left:203.6px;top:179.9px;font-size:6px;color:#555;font-weight:400;">Tiempo de funcionamient...</div>
<div class="t" style="left:203.6px;top:189.85px;font-size:10.5px;color:#111;font-weight:400;-webkit-text-stroke:0;">03:44:38</div>
<div class="t" style="left:282px;top:180.6px;font-size:5.6px;color:#555;font-weight:400;">Usuario</div>
<div class="t" style="left:308px;top:180.5px;font-size:5.8px;color:#111;font-weight:400;-webkit-text-stroke:0.3px #111">0.9%</div>
<div class="t" style="left:282px;top:189.6px;font-size:5.6px;color:#555;font-weight:400;">Sistema</div>
<div class="t" style="left:308px;top:189.5px;font-size:5.8px;color:#111;font-weight:400;-webkit-text-stroke:0.3px #111">1.4%</div>
<div class="t" style="left:282px;top:198.6px;font-size:5.6px;color:#555;font-weight:400;">Otros</div>
<div class="t" style="left:308px;top:198.5px;font-size:5.8px;color:#111;font-weight:400;-webkit-text-stroke:0.3px #111">0.1%</div>
<div class="t" style="left:353px;top:180.6px;font-size:5.6px;color:#555;font-weight:400;">Espera de ES</div>
<div class="t" style="left:393px;top:180.5px;font-size:5.8px;color:#111;font-weight:400;-webkit-text-stroke:0.3px #111">0.0%</div>
<svg class="abs" style="left:-224px;top:-262px" width="1200" height="599"><path d="M592.7 425.6L644.7 425.6" stroke="#f5c518" stroke-width="0.9"/><path d="M592.7 425.8L644.7 425.8" stroke="#72c21e" stroke-width="0.6"/><path d="M592.7 425L595 423L597.5 424.8L602 424.5L604.7 421.5L607 424.5L610 423L613 424.8L616 424.5L618.7 421L622 424.5L644.7 424.8" stroke="#f03cf0" stroke-width="1" fill="none"/></svg>
<div class="abs" style="left:456.5px;top:100.6px;width:1px;height:63.39999999999998px;background:#f3f3f3"></div>
<div class="abs" style="left:456.5px;top:100.6px;width:279.5px;height:1px;background:repeating-linear-gradient(to right,#dcdcdc 0 1px,transparent 1px 2px);opacity:0.35"></div>
<div class="abs" style="left:456.5px;top:106.94px;width:279.5px;height:1px;background:repeating-linear-gradient(to right,#dcdcdc 0 1px,transparent 1px 2px);opacity:0.35"></div>
<div class="abs" style="left:456.5px;top:113.28px;width:279.5px;height:1px;background:repeating-linear-gradient(to right,#dcdcdc 0 1px,transparent 1px 2px);opacity:1"></div>
<div class="abs" style="left:456.5px;top:119.62px;width:279.5px;height:1px;background:repeating-linear-gradient(to right,#dcdcdc 0 1px,transparent 1px 2px);opacity:1"></div>
<div class="abs" style="left:456.5px;top:125.96px;width:279.5px;height:1px;background:repeating-linear-gradient(to right,#dcdcdc 0 1px,transparent 1px 2px);opacity:0.55"></div>
<div class="abs" style="left:456.5px;top:132.3px;width:279.5px;height:1px;background:repeating-linear-gradient(to right,#dcdcdc 0 1px,transparent 1px 2px);opacity:1"></div>
<div class="abs" style="left:456.5px;top:138.64px;width:279.5px;height:1px;background:repeating-linear-gradient(to right,#dcdcdc 0 1px,transparent 1px 2px);opacity:1"></div>
<div class="abs" style="left:456.5px;top:144.98px;width:279.5px;height:1px;background:repeating-linear-gradient(to right,#dcdcdc 0 1px,transparent 1px 2px);opacity:0.55"></div>
<div class="abs" style="left:456.5px;top:151.32px;width:279.5px;height:1px;background:repeating-linear-gradient(to right,#dcdcdc 0 1px,transparent 1px 2px);opacity:0.55"></div>
<div class="abs" style="left:456.5px;top:157.66px;width:279.5px;height:1px;background:repeating-linear-gradient(to right,#dcdcdc 0 1px,transparent 1px 2px);opacity:1"></div>
<div class="abs" style="left:736px;top:100.6px;width:1px;height:63.39999999999998px;background:repeating-linear-gradient(to bottom,#d0d0d0 0 1px,transparent 1px 2px)"></div>
<div class="abs" style="left:456.5px;top:164px;width:279.5px;height:1px;background:#e8e8e8"></div>
<div class="t" style="left:455px;top:94.4px;font-size:6px;color:#444;font-weight:400;">100%</div>
<div class="t" style="left:456px;top:165.4px;font-size:6px;color:#444;font-weight:400;">10min</div>
<div class="t" style="left:733px;top:164.9px;font-size:6px;color:#444;font-weight:400;">0</div>
<div class="abs" style="left:684px;top:105.5px;width:52px;height:1px;background:#2a8cf0"></div>
<div class="abs" style="left:684px;top:111px;width:52px;height:1px;background:#66c030"></div>
<div class="abs" style="left:684px;top:157.2px;width:52px;height:1px;background:#f0902a"></div>
<div class="abs" style="left:684px;top:162.7px;width:52px;height:1px;background:#e83ce8"></div>
<div class="t" style="left:598px;top:166.68px;font-size:6.05px;color:#333;font-weight:400;"><span style="display:inline-block;width:2.6px;height:2.6px;border-radius:50%;background:#f0902a;margin:0 1.3px 1.2px 0;vertical-align:middle"></span><span style="margin-right:3.025px">Usado</span><span style="display:inline-block;width:2.6px;height:2.6px;border-radius:50%;background:#e83ce8;margin:0 1.3px 1.2px 0;vertical-align:middle"></span><span style="margin-right:3.025px">En búfer</span><span style="display:inline-block;width:2.6px;height:2.6px;border-radius:50%;background:#f0c020;margin:0 1.3px 1.2px 0;vertical-align:middle"></span><span style="margin-right:3.025px">Caché</span><span style="display:inline-block;width:2.6px;height:2.6px;border-radius:50%;background:#66c030;margin:0 1.3px 1.2px 0;vertical-align:middle"></span><span style="margin-right:3.025px">Libre</span><span style="display:inline-block;width:2.6px;height:2.6px;border-radius:50%;background:#2a8cf0;margin:0 1.3px 1.2px 0;vertical-align:middle"></span><span style="margin-right:3.025px">Disponible</span></div>
<svg class="abs" style="left:456px;top:178.6px" width="24" height="24"><circle cx="12" cy="12" r="9.9" fill="none" stroke="#1e9be8" stroke-width="2.4"/><circle cx="12" cy="12" r="7.6" fill="none" stroke="#9bd040" stroke-width="1.3"/><path d="M12 2.1a9.9 9.9 0 0 1 5.8 1.9" stroke="#f0902a" stroke-width="2.4" fill="none"/><text x="12" y="13.8" font-size="4.5" fill="#333" text-anchor="middle" font-family="Liberation Sans">9.5%</text></svg>
<div class="t" style="left:485.5px;top:180.4px;font-size:6px;color:#555;font-weight:400;">Usado</div>
<svg class="abs" style="left:504px;top:179px" width="8" height="8"><circle cx="4" cy="4" r="4" fill="#2a8cf0"/><rect x="3.4" y="3.2" width="1.2" height="3.3" fill="#fff"/><rect x="3.4" y="1.5" width="1.2" height="1" fill="#fff"/></svg>
<div class="t" style="left:514px;top:180.4px;font-size:6px;color:#555;font-weight:400;">/ Total de memoria disponible</div>
<div class="t" style="left:485.5px;top:190.15px;font-size:10.5px;color:#111;font-weight:400;-webkit-text-stroke:0;">749.29 <span style="font-size:7px">MB</span> / 7.67 <span style="font-size:7px">GB</span></div>
<div class="t" style="left:637px;top:180.6px;font-size:5.6px;color:#555;font-weight:400;">Caché</div>
<div class="t" style="left:669.5px;top:180.5px;font-size:5.8px;color:#111;font-weight:400;-webkit-text-stroke:0.3px #111">728.18 MB</div>
<div class="t" style="left:637px;top:189.6px;font-size:5.6px;color:#555;font-weight:400;">Libre</div>
<div class="t" style="left:669.5px;top:189.5px;font-size:5.8px;color:#111;font-weight:400;-webkit-text-stroke:0.3px #111">6.40 GB</div>
<div class="t" style="left:637px;top:198.6px;font-size:5.6px;color:#555;font-weight:400;">Disponible</div>
<div class="t" style="left:669.5px;top:198.5px;font-size:5.8px;color:#111;font-weight:400;-webkit-text-stroke:0.3px #111">6.94 GB</div>
<div class="abs" style="left:141.5px;top:253.2px;width:1px;height:63.0px;background:#f3f3f3"></div>
<div class="abs" style="left:141.5px;top:253.2px;width:279.20000000000005px;height:1px;background:repeating-linear-gradient(to right,#dcdcdc 0 1px,transparent 1px 2px);opacity:0.35"></div>
<div class="abs" style="left:141.5px;top:259.5px;width:279.20000000000005px;height:1px;background:repeating-linear-gradient(to right,#dcdcdc 0 1px,transparent 1px 2px);opacity:0.35"></div>
<div class="abs" style="left:141.5px;top:265.8px;width:279.20000000000005px;height:1px;background:repeating-linear-gradient(to right,#dcdcdc 0 1px,transparent 1px 2px);opacity:1"></div>
<div class="abs" style="left:141.5px;top:272.1px;width:279.20000000000005px;height:1px;background:repeating-linear-gradient(to right,#dcdcdc 0 1px,transparent 1px 2px);opacity:1"></div>
<div class="abs" style="left:141.5px;top:278.4px;width:279.20000000000005px;height:1px;background:repeating-linear-gradient(to right,#dcdcdc 0 1px,transparent 1px 2px);opacity:0.55"></div>
<div class="abs" style="left:141.5px;top:284.7px;width:279.20000000000005px;height:1px;background:repeating-linear-gradient(to right,#dcdcdc 0 1px,transparent 1px 2px);opacity:1"></div>
<div class="abs" style="left:141.5px;top:291.0px;width:279.20000000000005px;height:1px;background:repeating-linear-gradient(to right,#dcdcdc 0 1px,transparent 1px 2px);opacity:1"></div>
<div class="abs" style="left:141.5px;top:297.3px;width:279.20000000000005px;height:1px;background:repeating-linear-gradient(to right,#dcdcdc 0 1px,transparent 1px 2px);opacity:0.55"></div>
<div class="abs" style="left:141.5px;top:303.6px;width:279.20000000000005px;height:1px;background:repeating-linear-gradient(to right,#dcdcdc 0 1px,transparent 1px 2px);opacity:0.55"></div>
<div class="abs" style="left:141.5px;top:309.9px;width:279.20000000000005px;height:1px;background:repeating-linear-gradient(to right,#dcdcdc 0 1px,transparent 1px 2px);opacity:1"></div>
<div class="abs" style="left:420.7px;top:253.2px;width:1px;height:63.0px;background:repeating-linear-gradient(to bottom,#d0d0d0 0 1px,transparent 1px 2px)"></div>
<div class="abs" style="left:141.5px;top:316.2px;width:279.20000000000005px;height:1px;background:#e8e8e8"></div>
<div class="t" style="left:140px;top:247.0px;font-size:5.8px;color:#444;font-weight:400;">1.1 MB/s</div>
<div class="t" style="left:141px;top:318.4px;font-size:6px;color:#444;font-weight:400;">10min</div>
<div class="t" style="left:417px;top:316.9px;font-size:6px;color:#444;font-weight:400;">0</div>
<div class="t" style="left:356px;top:319.5px;font-size:6px;color:#333;font-weight:400;"><span style="display:inline-block;width:4px;height:4px;border-radius:50%;background:#72c21e;margin-right:1px;vertical-align:middle"></span>Recibido <span style="display:inline-block;width:4px;height:4px;border-radius:50%;border:0.8px dotted #2a8cf0;margin-right:1px;vertical-align:middle"></span>Enviado</div>
<div class="abs" style="left:141.5px;top:328px;width:1.2px;height:10px;background:#6ac02a"></div>
<div class="t" style="left:147px;top:331.9px;font-size:6px;color:#333;font-weight:400;">Recibido</div>
<div class="abs" style="left:243px;top:329px;width:1px;height:8px;background:repeating-linear-gradient(#2a8cf0 0 1px,transparent 1px 2px)"></div>
<div class="t" style="left:247px;top:331.9px;font-size:6px;color:#333;font-weight:400;">Enviado</div>
<svg class="abs" style="left:-224px;top:-262px" width="1200" height="599"><path d="M366 578 L434 578 L437 526 L440 578 L441.5 578 L444.5 564.4 L447.5 578 L495.7 578 L498.7 563.6 L501.7 578 L507.5 578 L510.5 559.7 L513.5 578 L538.3 578 L541.3 562.5 L544.3 578 L549.6 578 L552.6 546 L555.6 578 L559.2 578 L562.2 560.8 L565.2 578 L598 578 L600 576 L644 576" stroke="#1a86f0" stroke-width="1.2" stroke-dasharray="1.1 0.9" fill="none"/><path d="M366 578 L434 578 L437 562 L440 578 L443 578 L444.5 570 L447 578 L495 578 L497 576.5 L499 578 L505 578 L507 576.5 L509 578 L644 578" stroke="#7cc62e" stroke-width="1.1" fill="none"/></svg>
<div class="abs" style="left:442.5px;top:238.3px;width:308px;height:14.6px;background:#7d8494"></div>
<div class="t" style="left:448.5px;top:243.75px;font-size:5.5px;color:#fff;font-weight:400;">Nombre del proceso</div>
<div class="t" style="left:562px;top:244.0px;font-size:5px;color:#fff;font-weight:400;">&#x25BE;</div>
<div class="abs" style="left:570.5px;top:238.3px;width:1px;height:14.6px;background:#a0a6b2"></div>
<div class="abs" style="left:647.5px;top:238.3px;width:1px;height:14.6px;background:#a0a6b2"></div>
<div class="t" style="right:calc(100% - 639px);top:243.75px;font-size:5.5px;color:#fff;font-weight:400;">Uso de la CPU</div>
<div class="t" style="right:calc(100% - 742px);top:243.75px;font-size:5.5px;color:#fff;font-weight:400;">Memoria</div>
<div class="abs" style="left:442.5px;top:253.0px;width:308px;height:14.8px;background:#efefef;border-bottom:1px solid #d6d6d6"></div>
<svg class="abs" style="left:449px;top:256.8px" width="8" height="8"><rect x="0.5" y="0.5" width="6.5" height="6.5" fill="#fff" stroke="#888" stroke-width="0.6"/><rect x="1.5" y="2" width="4.5" height="3.5" fill="#bbb"/></svg>
<div class="t" style="left:457.5px;top:259.12px;font-size:5.55px;color:#333;font-weight:400;">System Processes (17)</div>
<div class="t" style="right:calc(100% - 640px);top:259.12px;font-size:5.55px;color:#333;font-weight:400;">1.51 %</div>
<div class="t" style="right:calc(100% - 733px);top:259.12px;font-size:5.55px;color:#333;font-weight:400;">487.5 MB</div>
<svg class="abs" style="left:738px;top:258.5px" width="7" height="5"><path d="M1 1l2.5 2.5l2.5-2.5" stroke="#666" stroke-width="0.8" fill="none"/></svg>
<div class="abs" style="left:442.5px;top:267.8px;width:308px;height:14.8px;background:#efefef;border-bottom:1px solid #d6d6d6"></div>
<svg class="abs" style="left:449px;top:271.6px" width="8" height="8"><rect x="0" y="0" width="7.5" height="7.5" rx="1" fill="#3b4a6a"/><circle cx="3.75" cy="3.2" r="1.6" fill="#f0c090"/><path d="M1 7.5q2.75-3 5.5 0z" fill="#e8b070"/></svg>
<div class="t" style="left:457.5px;top:273.92px;font-size:5.55px;color:#333;font-weight:400;">Soporte técnico (2)</div>
<div class="t" style="right:calc(100% - 640px);top:273.92px;font-size:5.55px;color:#333;font-weight:400;">0 %</div>
<div class="t" style="right:calc(100% - 733px);top:273.92px;font-size:5.55px;color:#333;font-weight:400;">3.9 MB</div>
<svg class="abs" style="left:738px;top:273.3px" width="7" height="5"><path d="M1 1l2.5 2.5l2.5-2.5" stroke="#666" stroke-width="0.8" fill="none"/></svg>
<div class="abs" style="left:442.5px;top:282.6px;width:308px;height:14.8px;background:#efefef;border-bottom:1px solid #d6d6d6"></div>
<svg class="abs" style="left:449px;top:286.4px" width="8" height="8"><circle cx="3.75" cy="3.75" r="3.5" fill="#5ab0f0"/><path d="M1 3.75h5.5M3.75 0.5v6.5" stroke="#d8f0ff" stroke-width="0.5"/></svg>
<div class="t" style="left:457.5px;top:288.73px;font-size:5.55px;color:#333;font-weight:400;">Servidor Web (1)</div>
<div class="t" style="right:calc(100% - 640px);top:288.73px;font-size:5.55px;color:#333;font-weight:400;">0 %</div>
<div class="t" style="right:calc(100% - 733px);top:288.73px;font-size:5.55px;color:#333;font-weight:400;">4.7 MB</div>
<svg class="abs" style="left:738px;top:288.1px" width="7" height="5"><path d="M1 1l2.5 2.5l2.5-2.5" stroke="#666" stroke-width="0.8" fill="none"/></svg>
<div class="abs" style="left:442.5px;top:297.4px;width:308px;height:14.8px;background:#efefef;border-bottom:1px solid #d6d6d6"></div>
<svg class="abs" style="left:449px;top:301.2px" width="8" height="8"><path d="M3.75 0.5l3.5 6.5h-7z" fill="none" stroke="#f09030" stroke-width="0.7"/><path d="M1.5 6.2h4.5" stroke="#3a8ee6" stroke-width="0.7"/></svg>
<div class="t" style="left:457.5px;top:303.52px;font-size:5.55px;color:#333;font-weight:400;">Servicio NFS (4)</div>
<div class="t" style="right:calc(100% - 640px);top:303.52px;font-size:5.55px;color:#333;font-weight:400;">0 %</div>
<div class="t" style="right:calc(100% - 733px);top:303.52px;font-size:5.55px;color:#333;font-weight:400;">15.3 MB</div>
<svg class="abs" style="left:738px;top:302.9px" width="7" height="5"><path d="M1 1l2.5 2.5l2.5-2.5" stroke="#666" stroke-width="0.8" fill="none"/></svg>
<div class="abs" style="left:442.5px;top:312.2px;width:308px;height:14.8px;background:#efefef;border-bottom:1px solid #d6d6d6"></div>
<svg class="abs" style="left:449px;top:316.0px" width="8" height="8"><rect x="0.5" y="0" width="6.5" height="7.5" rx="1" fill="#2aa8a8"/><path d="M1.5 2.5h4.5" stroke="#bfeaea" stroke-width="0.5"/></svg>
<div class="t" style="left:457.5px;top:318.33px;font-size:5.55px;color:#333;font-weight:400;">Registros del sistema (2)</div>
<div class="t" style="right:calc(100% - 640px);top:318.33px;font-size:5.55px;color:#333;font-weight:400;">0 %</div>
<div class="t" style="right:calc(100% - 733px);top:318.33px;font-size:5.55px;color:#333;font-weight:400;">10.7 MB</div>
<svg class="abs" style="left:738px;top:317.7px" width="7" height="5"><path d="M1 1l2.5 2.5l2.5-2.5" stroke="#666" stroke-width="0.8" fill="none"/></svg>
<div class="abs" style="left:442.5px;top:327.0px;width:308px;height:14.8px;background:#efefef;border-bottom:1px solid #d6d6d6"></div>
<svg class="abs" style="left:449px;top:330.8px" width="8" height="8"><path d="M3.75 0.5l3.5 6.5h-7z" fill="none" stroke="#f09030" stroke-width="0.7"/><path d="M1.5 6.2h4.5" stroke="#3a8ee6" stroke-width="0.7"/></svg>
<div class="t" style="left:457.5px;top:333.12px;font-size:5.55px;color:#333;font-weight:400;">Redes de Microsoft (13)</div>
<div class="t" style="right:calc(100% - 640px);top:333.12px;font-size:5.55px;color:#333;font-weight:400;">0 %</div>
<div class="t" style="right:calc(100% - 733px);top:333.12px;font-size:5.55px;color:#333;font-weight:400;">97.9 MB</div>
<svg class="abs" style="left:738px;top:332.5px" width="7" height="5"><path d="M1 1l2.5 2.5l2.5-2.5" stroke="#666" stroke-width="0.8" fill="none"/></svg>
<div class="abs" style="left:116px;top:324px;width:646px;height:13px;background:linear-gradient(to bottom,rgba(235,235,235,0),rgba(225,225,225,.35))"></div>
</div>
<svg class="abs" style="left:1183px;top:301px" width="14" height="24"><path d="M1.5 1.5l10 10.5l-10 10.5" stroke="#6f6f6f" stroke-width="0.9" fill="none"/></svg>
<div class="t" style="left:1118.6px;top:517.9px;font-size:26.6px;color:#fff;font-weight:400;-webkit-text-stroke:0;-webkit-text-stroke:0.5px #fff !important">00:18</div>
<div class="t" style="left:1132.2px;top:548.95px;font-size:9.9px;color:#fff;font-weight:400;-webkit-text-stroke:0;-webkit-text-stroke:0.12px #fff !important">Vie., Oct 25</div>
<div class="abs" style="left:1045px;top:563px;width:150px;height:36px;background:#0e1221"></div>
<svg class="abs" style="left:1045px;top:563px" width="150" height="36"><g fill="none" stroke="#3a9cc8" stroke-width="0.9"><path d="M7.5 10h8.5v6h-5l-1.5 1.5v-1.5h-2z"/></g><g fill="#3a9cc8"><circle cx="10" cy="13" r="0.5"/><circle cx="11.8" cy="13" r="0.5"/><circle cx="13.6" cy="13" r="0.5"/></g><path d="M140.5 5.5l4.5 4.5M145 5.5l-4.5 4.5" stroke="#9aa" stroke-width="0.8"/></svg>
<div class="t" style="left:1067.8px;top:575.23px;font-size:6.13px;color:#e8ecf5;font-weight:400;"><u>La actualización está disponible en App</u></div>
<div class="t" style="left:1067.8px;top:583.03px;font-size:6.13px;color:#e8ecf5;font-weight:400;"><u>Center ahora</u></div>
<svg class="abs" style="left:0px;top:430px" width="80" height="80">
 <path d="M30.3 11.5h16a14 14 0 0 1 0 28h-16a14 14 0 0 1 0-28z" fill="#f2f2f2"/>
 <path d="M42 11.5h4.3a14 14 0 0 1 0 28h-4.3z" fill="#d6d6d6"/>
 <path d="M29.8 19h16.5a7.6 7.6 0 0 1 0 15.3h-1l2.5 3.2l-2 1.2l-3.5-4.4h-12.5a7.6 7.6 0 0 1 0-15.3z" fill="#3a3a38"/>
 <circle cx="30.6" cy="26" r="2.4" fill="#b5e21e"/><circle cx="45.3" cy="26" r="2.4" fill="#b5e21e"/>
 <path d="M27 50c-5 1-8 4-10 10M48 50c5 1 8 4 10 10" stroke="#bdbdbd" stroke-width="1.8" fill="none"/>
 <path d="M13 62.5a3 3 0 1 1 5 0M55 62.5a3 3 0 1 1 5 0" stroke="#e6e6e6" stroke-width="1.8" fill="none"/>
 <ellipse cx="37.5" cy="51.6" rx="12" ry="11" fill="#ececec"/>
 <path d="M37.5 40.6a12 11 0 0 1 0 22z" fill="#d2d2d2"/>
 <circle cx="37.5" cy="51" r="6.3" fill="#8a9a7a"/><circle cx="37.5" cy="51" r="5.2" fill="#a6d42a"/><path d="M37.5 45.8a5.2 5.2 0 0 1 0 10.4z" fill="#8cbc1c"/>
 <rect x="33" y="61.5" width="9" height="12" rx="3" fill="#4a4a4a"/>
 <path d="M33.5 64.5h8M33.5 67.5h8M33.5 70.5h8" stroke="#777" stroke-width="0.8"/>
</svg>
<svg class="abs" style="left:13px;top:520px" width="32" height="42"><g fill="none" stroke="#eee" stroke-width="1.1"><path d="M1 6.5h29"/><path d="M10 6.5v-3.5h11v3.5"/><path d="M3 6.5l2.5 31.5q0.3 1 1.5 1h17q1.2 0 1.5-1l2.5-31.5"/></g></svg>
</body></html>
